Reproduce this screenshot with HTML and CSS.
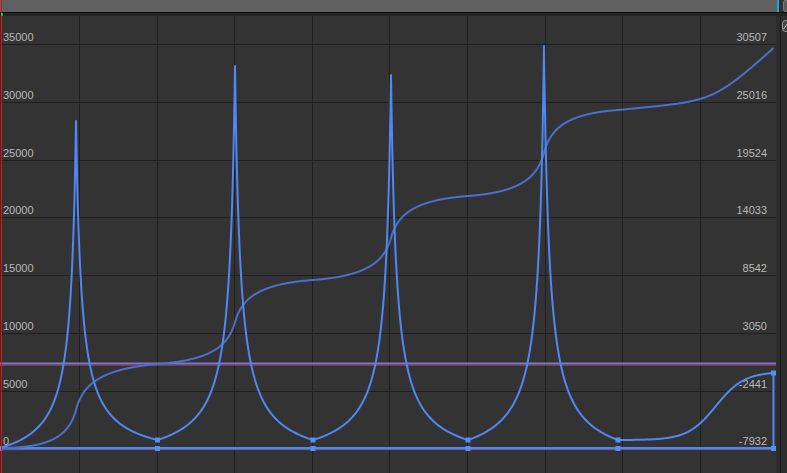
FILE: index.html
```html
<!DOCTYPE html>
<html>
<head>
    <title>Curve Editor</title>
    <link rel="stylesheet" href="styles.css">
</head>
<body>
    <div class="app">
        <div class="topbar">
            <div class="scroll"></div>
            <div class="corner"><span class="knob"></span></div>
        </div>
        <div class="ruler"></div>

        <div class="main">
            <div class="graph">
                <svg viewBox="0 16 776 457" width="776" height="457">
                    <g class="grid">
                        <line x1="79.5" y1="16" x2="79.5" y2="473"/>
                        <line x1="157.5" y1="16" x2="157.5" y2="473"/>
                        <line x1="234.5" y1="16" x2="234.5" y2="473"/>
                        <line x1="312.5" y1="16" x2="312.5" y2="473"/>
                        <line x1="389.5" y1="16" x2="389.5" y2="473"/>
                        <line x1="467.5" y1="16" x2="467.5" y2="473"/>
                        <line x1="545.5" y1="16" x2="545.5" y2="473"/>
                        <line x1="622.5" y1="16" x2="622.5" y2="473"/>
                        <line x1="700.5" y1="16" x2="700.5" y2="473"/>
                        <line x1="0" y1="44.5" x2="776" y2="44.5"/>
                        <line x1="0" y1="102.5" x2="776" y2="102.5"/>
                        <line x1="0" y1="160.5" x2="776" y2="160.5"/>
                        <line x1="0" y1="217.5" x2="776" y2="217.5"/>
                        <line x1="0" y1="275.5" x2="776" y2="275.5"/>
                        <line x1="0" y1="333.5" x2="776" y2="333.5"/>
                        <line x1="0" y1="391.5" x2="776" y2="391.5"/>
                    </g>

                    <g class="labels-left">
                        <text x="3" y="40.5">35000</text>
                        <text x="3" y="98.5">30000</text>
                        <text x="3" y="156.5">25000</text>
                        <text x="3" y="214">20000</text>
                        <text x="3" y="272">15000</text>
                        <text x="3" y="330">10000</text>
                        <text x="3" y="388">5000</text>
                        <text x="3" y="444.5">0</text>
                    </g>
                    <g class="labels-right">
                        <text x="767" y="40.5">30507</text>
                        <text x="767" y="98.5">25016</text>
                        <text x="767" y="156.5">19524</text>
                        <text x="767" y="214">14033</text>
                        <text x="767" y="272">8542</text>
                        <text x="767" y="330">3050</text>
                        <text x="767" y="388">-2441</text>
                        <text x="767" y="444.5">-7932</text>
                    </g>

                    <line class="flat-blue" x1="0" y1="363.5" x2="777" y2="363.5"/>
                    <line class="flat-red" x1="0" y1="365.1" x2="777" y2="365.1"/>
                    <line class="base-red" x1="0" y1="449.8" x2="773.5" y2="449.8"/>
                    <line class="base-blue" x1="0" y1="448.3" x2="773.5" y2="448.3"/>

                    <path id="stair" class="curve-stair" d=""/>
                    <path id="spikes" class="curve-spikes" d=""/>

                    <g class="keys">
                        <rect x="155" y="437.5" width="5" height="5"/>
                        <rect x="310.5" y="437.5" width="5" height="5"/>
                        <rect x="465.5" y="437.5" width="5" height="5"/>
                        <rect x="615.5" y="437.5" width="5" height="5"/>
                        <rect x="771" y="370.5" width="5" height="5"/>
                        <rect x="-2.5" y="446" width="5" height="5"/>
                        <rect x="155" y="446" width="5" height="5"/>
                        <rect x="310.5" y="446" width="5" height="5"/>
                        <rect x="465.5" y="446" width="5" height="5"/>
                        <rect x="615.5" y="446" width="5" height="5"/>
                        <rect x="771" y="446" width="5" height="5"/>
                    </g>
                </svg>
            </div>
            <div class="side">
                <div class="side-track">
                    <svg class="side-icon" viewBox="0 0 8 12" width="8" height="12">
                        <rect x="0.5" y="0.5" width="9" height="11" rx="3"/>
                        <line x1="1.5" y1="9" x2="6" y2="3"/>
                    </svg>
                </div>
            </div>
        </div>

        <div class="playhead"></div>
        <div class="playhead-mark"></div>
    </div>

    <script src="script.js"></script>
</body>
</html>
```

FILE: styles.css
```css
* {
    box-sizing: border-box;
}

body {
    margin: 0;
    background-color: #333333;
    font-family: "Liberation Sans", Arial, sans-serif;
    overflow: hidden;
}

.app {
    position: relative;
    width: 787px;
    height: 473px;
    display: flex;
    flex-direction: column;
}

.topbar {
    display: flex;
    height: 12px;
}

.scroll {
    flex: 1;
    background-color: #5f5f5f;
    border-right: 2px solid #1fa6e0;
}

.corner {
    width: 8px;
    background-color: #303030;
    display: flex;
    justify-content: flex-end;
}

.corner .knob {
    width: 4px;
    background-color: #5c5c5c;
    border: 1px solid #7a7a7a;
    border-right: none;
    border-radius: 3px 0 0 3px;
}

.ruler {
    height: 4px;
    background-color: #242424;
    border-top: 1px solid #0c0c0c;
}

.main {
    flex: 1;
    display: flex;
}

.graph {
    width: 776px;
    background-color: #333333;
}

.graph svg {
    display: block;
}

.grid line {
    stroke: #1f1f1f;
    stroke-width: 1;
}

.labels-left text,
.labels-right text {
    font-family: "Liberation Sans", Arial, sans-serif;
    font-size: 11px;
    fill: #b9b9b9;
}

.labels-right text {
    text-anchor: end;
}

.flat-blue {
    stroke: #7e76cc;
    stroke-width: 1.8;
}

.flat-red {
    stroke: #93506e;
    stroke-width: 1;
}

.base-blue {
    stroke: #4f86f0;
    stroke-width: 2.5;
}

.base-red {
    stroke: #7a3d5c;
    stroke-width: 1;
}

.curve-stair {
    fill: none;
    stroke: #4b70cc;
    stroke-width: 2;
    stroke-linejoin: round;
}

.curve-spikes {
    fill: none;
    stroke: #5087f2;
    stroke-width: 2;
    stroke-linejoin: round;
}

.keys rect {
    fill: #5a8ef6;
}

.side {
    flex: 1;
    background-color: #2c2c2c;
    padding-left: 4px;
}

.side-track {
    height: 100%;
    border-left: 1px solid #1a1a1a;
    padding-top: 4px;
    background-color: #2e2e2e;
}

.side-icon {
    display: block;
    margin-left: 1px;
}

.side-icon rect {
    fill: #444444;
    stroke: #9a9a9a;
    stroke-width: 1;
}

.side-icon line {
    stroke: #c8c8c8;
    stroke-width: 1;
}

.playhead {
    position: absolute;
    left: 1px;
    top: 0;
    bottom: 0;
    width: 1px;
    background-color: #e01010;
}

.playhead-mark {
    position: absolute;
    left: 1px;
    top: 13px;
    width: 2px;
    height: 3px;
    background-color: #22c022;
}
```

FILE: script.js
```js
// keyframes of the spiky curve (page coordinates)
const minX = [0, 157.5, 313, 468, 618];
const minY = [448, 440, 440, 440, 440];
const peaks = [
    { x: 76, y: 121 },
    { x: 235, y: 66 },
    { x: 391, y: 75 },
    { x: 544, y: 46 }
];
const endX = 773.5;
const endY = 373;
const E = 5.5;

// where the second curve sits at each key
const stairKeys = [448, 364, 280, 196, 110, 48];

function falloff(d, D) {
    const c = 1 / (1 + D / E);
    return (1 / (1 + d / E) - c) / (1 - c);
}

function ease(t) {
    const s = k => 1 / (1 + Math.exp(-(k - 0.63) * 11));
    return (s(t) - s(0)) / (s(1) - s(0));
}

function spikeY(x) {
    for (let i = 0; i < peaks.length; i++) {
        if (x <= minX[i + 1]) {
            const p = peaks[i];
            if (x <= p.x) {
                return minY[i] - (minY[i] - p.y) * falloff(p.x - x, p.x - minX[i]);
            }
            return minY[i + 1] - (minY[i + 1] - p.y) * falloff(x - p.x, minX[i + 1] - p.x);
        }
    }
    const t = (x - 618) / (endX - 618);
    return 440 - (440 - endY) * ease(t);
}

let xs = [];
for (let x = 0; x < endX; x += 0.5) xs.push(x);
peaks.forEach(p => xs.push(p.x));
minX.forEach(x => xs.push(x));
xs.push(endX);
xs = xs.sort((a, b) => a - b).filter((x, i, a) => i === 0 || x !== a[i - 1]);

const ys = xs.map(spikeY);

let spikes = "M" + xs[0] + "," + ys[0].toFixed(2);
for (let i = 1; i < xs.length; i++) {
    spikes += " L" + xs[i] + "," + ys[i].toFixed(2);
}
spikes += " L" + endX + ",448.3";
document.getElementById("spikes").setAttribute("d", spikes);

// the second curve is the running total of the first, fitted between keys
const bounds = minX.concat([endX]);
const cum = [0];
for (let i = 1; i < xs.length; i++) {
    const a = 448 - ys[i - 1];
    const b = 448 - ys[i];
    cum.push(cum[i - 1] + (a + b) / 2 * (xs[i] - xs[i - 1]));
}
const cumAt = bounds.map(bx => cum[xs.indexOf(bx)]);

let stair = "";
for (let i = 0; i < xs.length; i++) {
    let seg = 0;
    while (seg < bounds.length - 2 && xs[i] > bounds[seg + 1]) seg++;
    const f = (cum[i] - cumAt[seg]) / (cumAt[seg + 1] - cumAt[seg]);
    const y = stairKeys[seg] + (stairKeys[seg + 1] - stairKeys[seg]) * f;
    stair += (i === 0 ? "M" : " L") + xs[i] + "," + y.toFixed(2);
}
document.getElementById("stair").setAttribute("d", stair);
```
